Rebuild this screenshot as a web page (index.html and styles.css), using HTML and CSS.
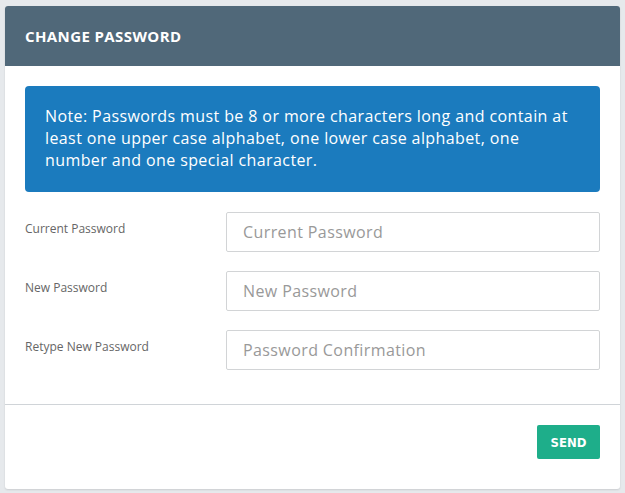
FILE: index.html
```html
<!DOCTYPE html>
<html lang="en">
<head>
  <meta charset="UTF-8" />
  <title>Change Password</title>
  <link rel="stylesheet" href="styles.css">
</head>
<body>
  <div class="card">
    <!-- Header -->
    <div class="cardHeader">
      <h2>CHANGE PASSWORD</h2>
    </div>

    <!-- Body -->
    <form class="cardBody" id="passwordForm">
      <div class="note">
        Note: Passwords must be 8 or more characters long and contain at least one upper case alphabet, one lower case alphabet, one number and one special character.
      </div>

      <div class="formRow">
        <label for="currentPassword">Current Password</label>
        <input type="password" id="currentPassword" placeholder="Current Password" />
      </div>
      <div class="formRow">
        <label for="newPassword">New Password</label>
        <input type="password" id="newPassword" placeholder="New Password" />
      </div>
      <div class="formRow">
        <label for="confirmPassword">Retype New Password</label>
        <input type="password" id="confirmPassword" placeholder="Password Confirmation" />
      </div>
    </form>

    <!-- Footer -->
    <div class="cardFooter">
      <button type="submit" form="passwordForm" class="sendButton">SEND</button>
    </div>
  </div>
</body>
</html>
```

FILE: styles.css
```css
body {
  margin: 0;
  padding: 6px 5px;
  background-color: #e6e9ec;
  font-family: "Open Sans", Arial, sans-serif;
}

.card {
  width: 615px;
  background-color: white;
  border-radius: 3px;
  box-shadow: 0 1px 2px rgba(0,0,0,0.12);
  overflow: hidden;
}

.cardHeader {
  background-color: #506879;
  height: 60px;
  display: flex;
  align-items: center;
  padding: 0 20px;
}

.cardHeader h2 {
  margin: 0;
  color: white;
  font-size: 15px;
  font-weight: bold;
  letter-spacing: 0.4px;
}

.cardBody {
  padding: 20px 20px 15px;
  border-bottom: 1px solid #d0d4d8;
}

.note {
  background-color: #1b7bbe;
  color: white;
  font-size: 16px;
  line-height: 22px;
  letter-spacing: 0.4px;
  padding: 19px 20px 21px;
  border-radius: 4px;
  margin-bottom: 20px;
}

.formRow {
  display: flex;
  align-items: flex-start;
  margin-bottom: 19px;
}

.formRow label {
  width: 201px;
  font-size: 12px;
  color: #666;
  padding-top: 8px;
}

.formRow input {
  flex: 1;
  height: 40px;
  box-sizing: border-box;
  padding: 0 16px;
  font-family: inherit;
  font-size: 16px;
  letter-spacing: 0.4px;
  border: 1px solid #d2d4d6;
  border-radius: 2px;
  outline: none;
}

.formRow input::placeholder {
  color: #999;
}

.cardFooter {
  display: flex;
  justify-content: flex-end;
  padding: 20px 20px 30px;
}

.sendButton {
  width: 63px;
  height: 34px;
  background-color: #1eae8a;
  color: white;
  border: none;
  border-radius: 2px;
  font-family: "DejaVu Sans Condensed", "DejaVu Sans", sans-serif;
  font-weight: bold;
  font-size: 13px;
  cursor: pointer;
}
```
